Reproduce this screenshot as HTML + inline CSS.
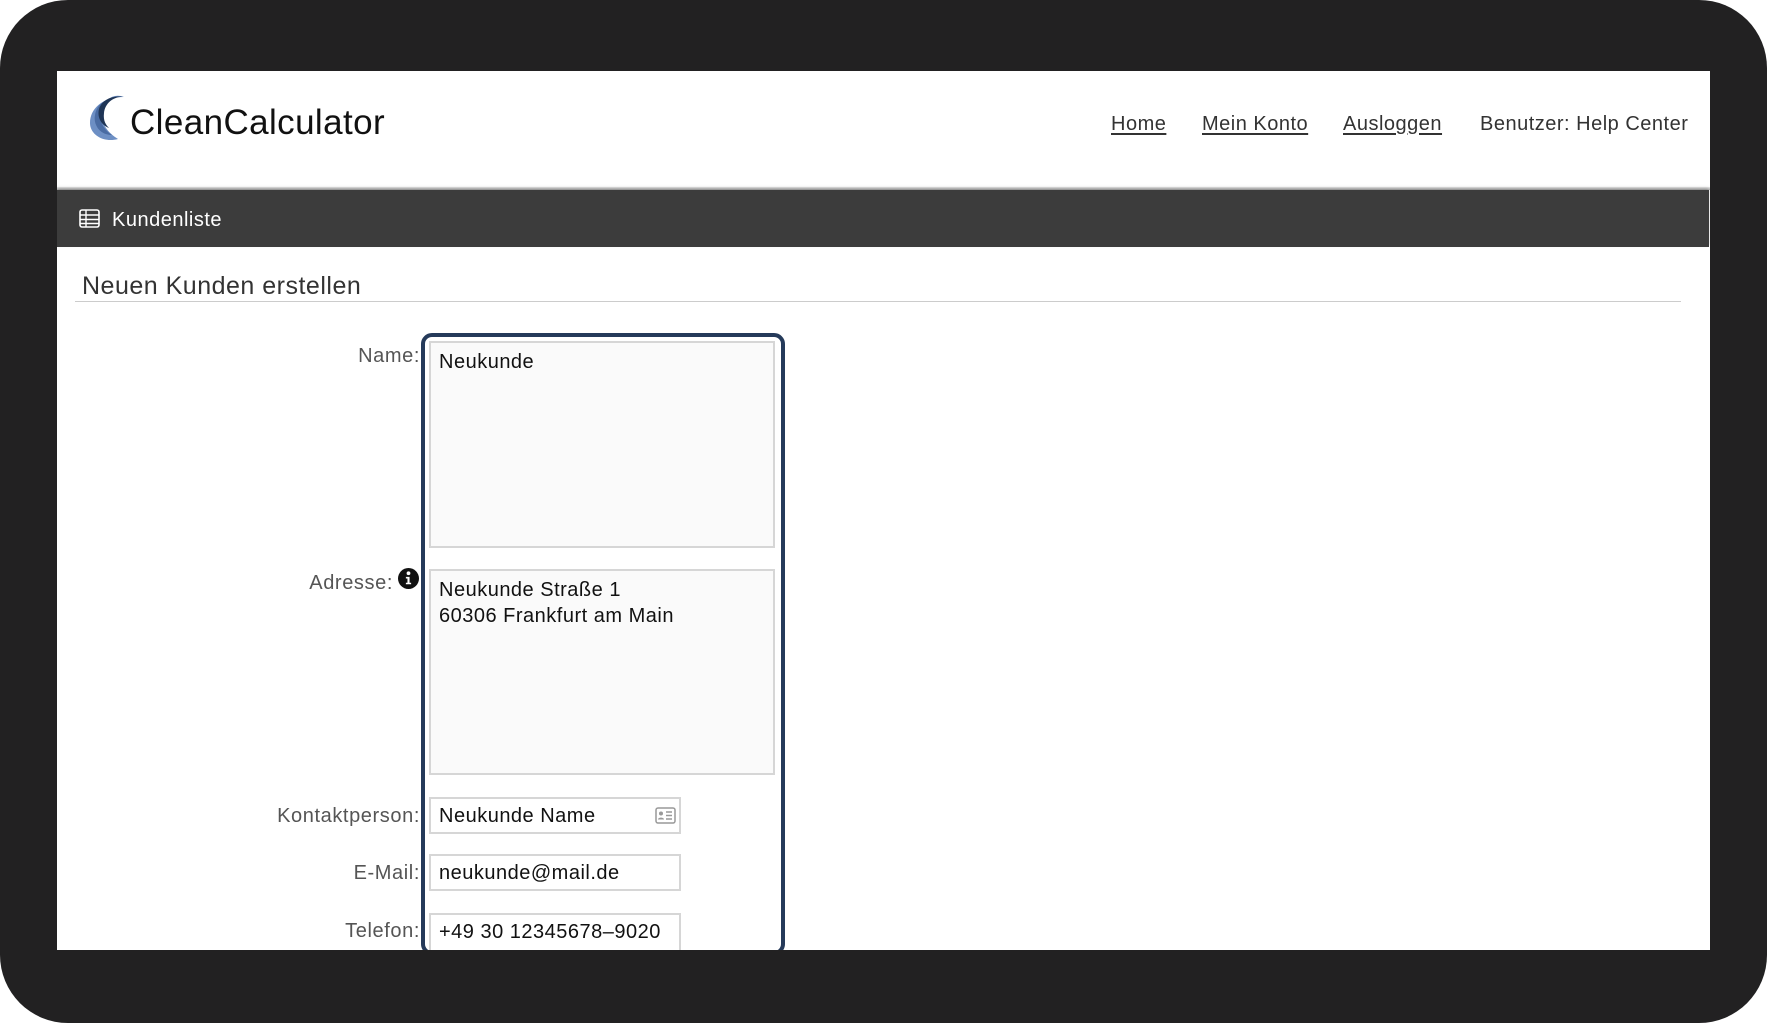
<!DOCTYPE html>
<html><head><meta charset="utf-8"><style>
*{margin:0;padding:0;box-sizing:border-box}
body{width:1767px;height:1023px;background:#fff;overflow:hidden;font-family:"Liberation Sans",sans-serif;position:relative}
.frame{position:absolute;left:0;top:0;width:1767px;height:1023px;background:#222122;border-radius:68px}
.page{position:absolute;left:57px;top:71px;width:1653px;height:879px;background:#fff;overflow:hidden}
.abs{position:absolute}
.nav a,.nav span{position:absolute;top:42px;font-size:20px;color:#333;letter-spacing:0.5px}
.nav a{text-decoration:underline;text-underline-offset:3px}
.bar{position:absolute;left:0;top:119px;width:1652px;height:57px;background:#3c3c3c;box-shadow:0 -2px 3px rgba(0,0,0,.25)}
.lbl{position:absolute;font-size:20px;color:#555;text-align:right;white-space:nowrap;letter-spacing:0.6px}
.box{position:absolute;background:#fafafa;border:2px solid #d6d6d6;font-size:20px;color:#111;padding:8px 8px 0 8px;line-height:26px;letter-spacing:0.5px}
</style></head><body>
<div class="frame"></div>
<div class="page">
  <svg class="abs" style="left:31px;top:22px" width="38" height="50" viewBox="0 0 38 50">
    <path d="M36 4 C26 0 16 6 14 18 C12 30 20 40 30 46 C16 50 2 42 2 30 C2 16 14 4 36 4Z" fill="#6d8fc4"/>
    <path d="M36 4 C24 2 14 10 13 22 C12 32 18 38 24 42 C12 42 5 32 7 22 C9 10 20 3 36 4Z" fill="#4a6ca3"/>
    <path d="M36 4 C26 3 17 10 16 20 C15 28 18 32 21 35 C13 32 9 24 11 16 C14 7 24 2 36 4Z" fill="#1f3556"/>
  </svg>
  <div class="abs" style="left:73px;top:32px;font-size:35px;color:#111;letter-spacing:0.4px">CleanCalculator</div>
  <div class="nav">
    <a style="left:1054px">Home</a>
    <a style="left:1145px">Mein Konto</a>
    <a style="left:1286px">Ausloggen</a>
    <span style="left:1423px">Benutzer: Help Center</span>
  </div>
  <div class="abs" style="left:0;top:116px;width:1653px;height:3px;background:linear-gradient(#eee,#bbb)"></div>
  <div class="bar">
    <svg class="abs" style="left:22px;top:19px" width="21" height="19" viewBox="0 0 21 19"><rect x="1" y="1" width="19" height="17" rx="2" fill="none" stroke="#fff" stroke-width="1.6"/><path d="M1 6H20M1 10.5H20M1 14.5H20M7 1V18" stroke="#fff" stroke-width="1.4"/></svg>
    <div class="abs" style="left:55px;top:19px;font-size:20px;color:#fff;letter-spacing:0.5px">Kundenliste</div>
  </div>
  <div class="abs" style="left:25px;top:201px;font-size:25px;color:#333;letter-spacing:0.5px">Neuen Kunden erstellen</div>
  <div class="abs" style="left:18px;top:230px;width:1606px;height:1px;background:#ccc"></div>

  <div class="lbl" style="top:274px;right:1290px">Name:</div>
  <div class="lbl" style="top:501px;right:1317px">Adresse:</div>
  <svg class="abs" style="left:341px;top:497px" width="21" height="21" viewBox="0 0 20 20"><circle cx="10" cy="10" r="10" fill="#111"/><circle cx="10" cy="5" r="1.8" fill="#fff"/><path d="M7.5 8.5H11V14H12.5V15.5H7.5V14H9V10H7.5Z" fill="#fff"/></svg>
  <div class="lbl" style="top:734px;right:1290px">Kontaktperson:</div>
  <div class="lbl" style="top:791px;right:1290px">E-Mail:</div>
  <div class="lbl" style="top:849px;right:1290px">Telefon:</div>

  <div class="abs" style="left:364px;top:262px;width:364px;height:622px;border:4px solid #253a5a;border-radius:11px"></div>
  <div class="box" style="left:372px;top:270px;width:346px;height:207px;padding-top:6px">Neukunde</div>
  <div class="box" style="left:372px;top:498px;width:346px;height:206px;padding-top:6px">Neukunde Straße 1<br>60306 Frankfurt am Main</div>
  <div class="box" style="left:372px;top:726px;width:252px;height:37px;background:#fff;padding-top:4px">Neukunde Name
    <svg class="abs" style="left:224px;top:8px" width="21" height="17" viewBox="0 0 21 17"><rect x="1" y="1" width="19" height="15" rx="2" fill="none" stroke="#999" stroke-width="1.5"/><circle cx="6" cy="6.5" r="2" fill="#999"/><path d="M3 12.5C3 10 9 10 9 12.5Z" fill="#999"/><path d="M11 5H17M11 8.5H17M11 12H17" stroke="#999" stroke-width="1.5"/></svg>
  </div>
  <div class="box" style="left:372px;top:783px;width:252px;height:37px;background:#fff;padding-top:4px">neukunde@mail.de</div>
  <div class="box" style="left:372px;top:842px;width:252px;height:40px;background:#fff;padding-top:4px;overflow:hidden;white-space:nowrap">+49 30 12345678–9020</div>
</div>
</body></html>
